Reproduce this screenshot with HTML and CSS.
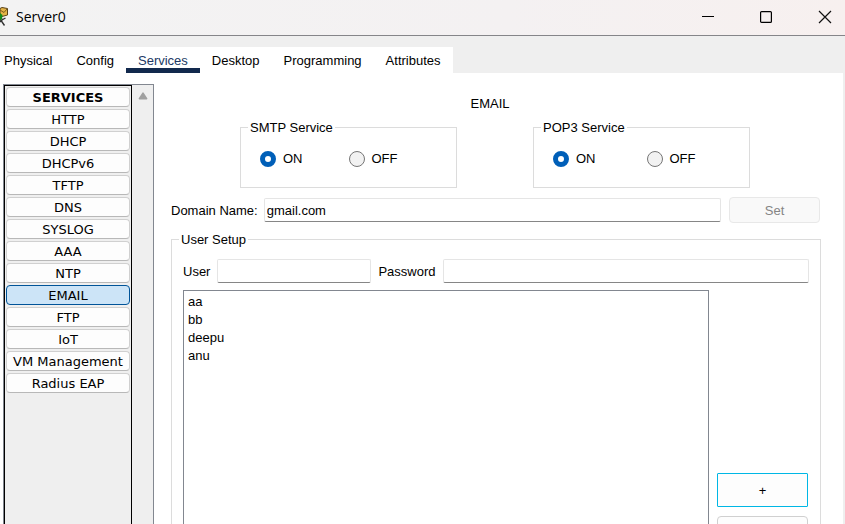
FILE: index.html
```html
<!DOCTYPE html>
<html lang="en">
<head>
<meta charset="utf-8">
<title>Server0</title>
<meta name="viewport" content="width=device-width, initial-scale=1">
<link rel="stylesheet" href="styles.css">
</head>
<body>
<header class="titlebar">
  <svg class="app-icon" width="9" height="22" viewBox="0 0 9 22" aria-hidden="true">
    <path d="M0 2.5 2 1.5 7.5 2.5 7.5 9 2 10.5 0 10Z" fill="#e3b447" stroke="#5a4215"/>
    <path d="M0 4 4 6.5 7 3" fill="none" stroke="#7d5c1c"/>
    <path d="M0 7 2.5 9 2 13 0 15Z" fill="#138a1c"/>
    <path d="M5.5 12 1 14.5 4.5 19.5M0 16 3 13" fill="none" stroke="#333" stroke-width="1.4"/>
  </svg>
  <h1 class="title">Server0</h1>
  <div class="window-controls">
    <button type="button" aria-label="Minimize"><svg width="14" height="14" viewBox="0 0 14 14"><path d="M0 6.5h12" stroke="#000"/></svg></button>
    <button type="button" aria-label="Maximize"><svg width="14" height="14" viewBox="0 0 14 14"><rect x=".6" y="1.6" width="10.8" height="10.8" rx="1" fill="none" stroke="#000" stroke-width="1.2"/></svg></button>
    <button type="button" aria-label="Close"><svg width="14" height="14" viewBox="0 0 14 14"><path d="M1 1 13 13M13 1 1 13" stroke="#111" stroke-width="1.2"/></svg></button>
  </div>
</header>

<nav class="tabs">
  <a href="#physical">Physical</a>
  <a href="#config">Config</a>
  <a href="#services" class="active">Services</a>
  <a href="#desktop">Desktop</a>
  <a href="#programming">Programming</a>
  <a href="#attributes">Attributes</a>
</nav>

<div class="workspace">
  <aside class="sidebar">
    <div class="service-list">
      <button type="button" class="heading">SERVICES</button>
      <button type="button">HTTP</button>
      <button type="button">DHCP</button>
      <button type="button">DHCPv6</button>
      <button type="button">TFTP</button>
      <button type="button">DNS</button>
      <button type="button">SYSLOG</button>
      <button type="button">AAA</button>
      <button type="button">NTP</button>
      <button type="button" class="selected">EMAIL</button>
      <button type="button">FTP</button>
      <button type="button">IoT</button>
      <button type="button">VM Management</button>
      <button type="button">Radius EAP</button>
    </div>
    <div class="scrollbar">
      <svg width="10" height="8" viewBox="0 0 10 8" aria-hidden="true"><path d="M5 1.2 8.6 6.6H1.4Z" fill="#a0a0a0" stroke="#a0a0a0" stroke-width="1.6" stroke-linejoin="round"/></svg>
    </div>
  </aside>

  <main class="panel">
    <h2 class="panel-title">EMAIL</h2>

    <div class="services">
      <fieldset class="group">
        <legend>SMTP Service</legend>
        <div class="options">
          <label><input type="radio" name="smtp" checked>ON</label>
          <label><input type="radio" name="smtp">OFF</label>
        </div>
      </fieldset>
      <fieldset class="group">
        <legend>POP3 Service</legend>
        <div class="options wide">
          <label><input type="radio" name="pop3" checked>ON</label>
          <label><input type="radio" name="pop3">OFF</label>
        </div>
      </fieldset>
    </div>

    <div class="domain">
      <label for="domain">Domain Name:</label>
      <input class="field" id="domain" type="text" value="gmail.com">
      <button type="button" class="button" disabled>Set</button>
    </div>

    <fieldset class="group user-setup">
      <legend>User Setup</legend>
      <div class="credentials">
        <label for="user">User</label>
        <input class="field user-field" id="user" type="text">
        <label for="password">Password</label>
        <input class="field" id="password" type="password">
      </div>
      <div class="accounts">
        <ul class="user-list">
          <li>aa</li>
          <li>bb</li>
          <li>deepu</li>
          <li>anu</li>
        </ul>
        <div class="actions">
          <button type="button" class="button focused">+</button>
          <button type="button" class="button" aria-label="Remove"></button>
        </div>
      </div>
    </fieldset>
  </main>
</div>
</body>
</html>
```
FILE: styles.css
```css
* { box-sizing: border-box; }

body {
  margin: 0;
  height: 100vh;
  overflow: hidden;
  display: flex;
  flex-direction: column;
  background: #efefef;
  color: #000;
  font: 13px/18px "Liberation Sans", Arial, sans-serif;
}

button, input { font: inherit; color: inherit; }

.titlebar {
  display: flex;
  align-items: center;
  flex: none;
  height: 36px;
  padding-bottom: 2px;
  border-bottom: 1px solid #858589;
  background: linear-gradient(90deg, #f3f3f3, #f4f1f2 60%, #f7f0ef);
}
.app-icon { flex: none; }
.title {
  margin: 0 0 0 7px;
  font: 14px/20px "Open Sans", "Noto Sans", sans-serif;
}
.window-controls { display: flex; margin-left: auto; }
.window-controls button {
  display: flex;
  justify-content: center;
  padding: 0 22px;
  border: 0;
  background: none;
}
.window-controls button:last-child { padding-right: 13px; }

.tabs {
  display: flex;
  flex: none;
  align-self: flex-start;
  margin-top: 11px;
  background: #fff;
}
.tabs a {
  padding: 6px 12px 0;
  border-bottom: 5px solid transparent;
  color: #000;
  line-height: 15px;
  text-decoration: none;
}
.tabs a:first-child { padding-left: 4px; }
.tabs .active { color: #203864; border-color: #12294d; }

.workspace {
  display: flex;
  flex: 1;
  min-height: 0;
  margin-right: 2px;
  background: #fff;
}

.sidebar {
  display: flex;
  flex: none;
  width: 151px;
  margin: 11px 0 0 3px;
  border: 1px solid #828790;
  border-bottom: 0;
  background: #efefef;
}
.service-list {
  display: flex;
  flex-direction: column;
  flex: 1;
  gap: 2px;
  padding: 1px;
  border: 1px solid #000;
  border-bottom: 0;
  font: 13px/16px "DejaVu Sans", Verdana, sans-serif;
}
.service-list button {
  height: 20px;
  padding: 2px 0 0;
  border: 1px solid #d0d0d0;
  border-bottom-color: #b8b8b8;
  border-radius: 4px;
  background: #fdfdfd;
  white-space: nowrap;
}
.service-list .heading { font-weight: bold; }
.service-list .selected {
  border-color: #005499;
  background: #cce4f7;
}
.scrollbar {
  width: 21px;
  padding-top: 7px;
  text-align: center;
  line-height: 8px;
}

.panel {
  flex: 1;
  display: flex;
  flex-direction: column;
  min-width: 0;
  padding: 22px 22px 0 17px;
}
.panel-title {
  margin: 0 12px 5px 0;
  font-size: 13px;
  font-weight: normal;
  text-align: center;
}

.group {
  min-width: 0;
  margin: 0;
  padding: 0;
  border: 1px solid #dcdcdc;
}
.group legend { margin-left: 7px; padding: 1px 2px 0; }

.services {
  display: grid;
  grid-template-columns: 1fr 1fr;
  gap: 76px;
  padding: 0 71px 0 69px;
}
.options { display: flex; gap: 46px; padding: 13px 19px 19px; }
.options.wide { gap: 51px; }
.options label { display: flex; align-items: center; gap: 7px; }
.options input {
  appearance: none;
  width: 16px;
  height: 16px;
  margin: 0;
  border: 1px solid #767676;
  border-radius: 50%;
  background: #f2f2f2;
}
.options input:checked { border: 5px solid #005fb8; background: #fff; }

.domain {
  display: grid;
  grid-template-columns: auto 1fr 91px;
  align-items: center;
  margin: 9px 1px 7px 0;
}
.domain label { margin-right: 6px; padding-top: 1px; }
.domain .field { width: auto; margin-right: 8px; }

.field {
  width: 100%;
  min-width: 0;
  height: 24px;
  padding: 0 2px;
  border: 1px solid #e5e5e5;
  border-bottom-color: #868686;
  border-radius: 2px;
  background: #fff;
}

.button {
  height: 26px;
  padding: 1px 0 0;
  border: 1px solid #d0d0d0;
  border-radius: 4px;
  background: #fdfdfd;
}
.button:disabled { border-color: #e8e8e8; background: #f9f9f9; color: #858585; }

.user-setup { flex: 1; }
.credentials {
  display: flex;
  align-items: center;
  gap: 7px;
  padding: 10px 11px 7px;
}
.credentials label { padding-top: 1px; }
.field.user-field { flex: none; width: 154px; }

.accounts {
  display: grid;
  grid-template-columns: 1fr 91px;
  gap: 8px;
  padding: 0 12px 12px 11px;
}
.user-list {
  min-height: 340px;
  margin: 0;
  padding: 2px 4px;
  border: 1px solid #828790;
  list-style: none;
}
.actions {
  display: flex;
  flex-direction: column;
  gap: 9px;
  padding-top: 183px;
}
.actions .button { height: 34px; }
.actions .focused { border-color: #00b7e5; border-radius: 1px; }
```
